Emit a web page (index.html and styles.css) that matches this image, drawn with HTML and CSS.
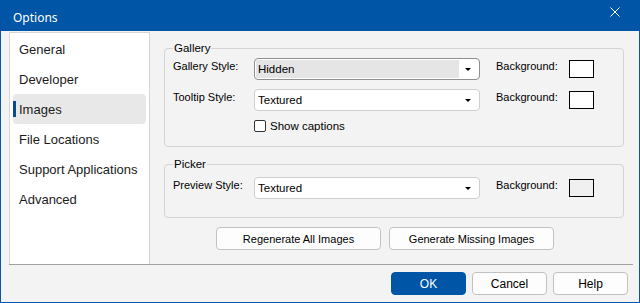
FILE: index.html
```html
<!DOCTYPE html>
<html lang="en">
<head>
  <meta charset="UTF-8">
  <title>Options</title>
  <link rel="stylesheet" href="styles.css">
</head>
<body>
  <div class="window">
    <div class="titlebar">
      <span class="title">Options</span>
      <svg class="close" width="10" height="10" viewBox="0 0 10 10">
        <path d="M0.5 0.5 L9.5 9.5 M9.5 0.5 L0.5 9.5" stroke="#fff" stroke-width="1"/>
      </svg>
    </div>

    <div class="main">
      <!-- left navigation -->
      <div class="nav">
        <div class="nav-item">General</div>
        <div class="nav-item">Developer</div>
        <div class="nav-item active">Images</div>
        <div class="nav-item">File Locations</div>
        <div class="nav-item">Support Applications</div>
        <div class="nav-item">Advanced</div>
      </div>

      <div class="panel">
        <fieldset class="group gallery">
          <legend>Gallery</legend>
          <div class="row">
            <span class="label">Gallery Style:</span>
            <div class="combo focused">
              <span class="combo-value">Hidden</span>
              <span class="combo-arrow"></span>
            </div>
            <span class="label bg-label">Background:</span>
            <span class="swatch"></span>
          </div>
          <div class="row">
            <span class="label">Tooltip Style:</span>
            <div class="combo">
              <span class="combo-value">Textured</span>
              <span class="combo-arrow"></span>
            </div>
            <span class="label bg-label">Background:</span>
            <span class="swatch"></span>
          </div>
          <label class="check">
            <span class="checkbox"></span>
            Show captions
          </label>
        </fieldset>

        <fieldset class="group picker">
          <legend>Picker</legend>
          <div class="row">
            <span class="label">Preview Style:</span>
            <div class="combo">
              <span class="combo-value">Textured</span>
              <span class="combo-arrow"></span>
            </div>
            <span class="label bg-label">Background:</span>
            <span class="swatch grey"></span>
          </div>
        </fieldset>

        <div class="actions">
          <button class="btn wide">Regenerate All Images</button>
          <button class="btn wide">Generate Missing Images</button>
        </div>
      </div>
    </div>

    <div class="footer">
      <button class="btn dialog primary">OK</button>
      <button class="btn dialog">Cancel</button>
      <button class="btn dialog">Help</button>
    </div>
  </div>
</body>
</html>
```

FILE: styles.css
```css
body {
  margin: 0;
  background-color: #f3f3f3;
  font-family: "Liberation Sans", Arial, sans-serif;
  font-size: 11px;
  color: #000;
}

.window {
  width: 640px;
  height: 303px;
  box-sizing: border-box;
  border: 1px solid #0a55a5;
  border-top: none;
  background-color: #f3f3f3;
}

.titlebar {
  height: 31px;
  margin: 0 -1px;
  background-color: #0055a6;
  display: flex;
  align-items: center;
  justify-content: space-between;
  padding: 0 20px 0 13px;
}

.title {
  color: #fff;
  font-family: "Noto Sans", sans-serif;
  font-size: 12px;
  padding-top: 3px;
}

.close {
  margin-top: -7px;
}

.main {
  display: flex;
  height: 232px;
  margin: 1px 6px 0 8px;
  border-bottom: 1px solid #a0a0a0;
}

.nav {
  width: 141px;
  box-sizing: border-box;
  background-color: #fff;
  border: 1px solid #d6d6d6;
  border-bottom: none;
  padding: 1px 3px 0 3px;
  font-family: "Liberation Sans", Arial, sans-serif;
  font-size: 13px;
  color: #1b1b1b;
}

.nav-item {
  position: relative;
  height: 30px;
  line-height: 32px;
  padding-left: 6px;
  border-radius: 4px;
  white-space: nowrap;
}

.nav-item.active {
  background-color: #e8e8e8;
}

.nav-item.active::before {
  content: "";
  position: absolute;
  left: 0;
  top: 7px;
  width: 3px;
  height: 16px;
  background-color: #0a4a94;
}

.panel {
  flex: 1;
  padding: 9px 0 0 14px;
}

.group {
  margin: 0;
  border: 1px solid #d4d4d4;
  border-radius: 4px;
  padding: 3px 8px 14px 8px;
  width: 460px;
  box-sizing: border-box;
}

.group legend {
  padding: 0 1px;
  font-size: 11.5px;
  line-height: 14px;
}

.picker {
  margin-top: 10px;
  padding-top: 6px;
  padding-bottom: 18px;
}

.row {
  display: flex;
  align-items: flex-start;
  height: 22px;
  margin-bottom: 9px;
}

.picker .row {
  margin-bottom: 0;
}

.label {
  width: 81px;
  padding-top: 1px;
  line-height: 14px;
}

.bg-label {
  width: 73px;
  margin-left: 16px;
}

.combo {
  width: 226px;
  height: 22px;
  box-sizing: border-box;
  border: 1px solid #cfcfcf;
  border-radius: 4px;
  background-color: #fff;
  display: flex;
  align-items: center;
  padding: 1px;
}

.combo.focused {
  border-color: #8f8f8f;
}

.combo-value {
  flex: 1;
  height: 100%;
  line-height: 18px;
  padding-left: 2px;
  font-size: 11.5px;
}

.combo.focused .combo-value {
  background-color: #e5e5e5;
}

.combo-arrow {
  width: 0;
  height: 0;
  margin: 0 7px 0 6px;
  border-left: 3px solid transparent;
  border-right: 3px solid transparent;
  border-top: 3px solid #000;
}

.swatch {
  width: 25px;
  height: 18px;
  box-sizing: border-box;
  border: 1px solid #000;
  background-color: #fff;
  margin-top: 2px;
}

.swatch.grey {
  background-color: #f0f0f0;
}

.check {
  display: flex;
  align-items: center;
  margin-left: 81px;
  height: 12px;
  font-size: 11.5px;
}

.checkbox {
  width: 12px;
  height: 12px;
  box-sizing: border-box;
  border: 1px solid #333;
  border-radius: 2px;
  background-color: #fff;
  margin-right: 4px;
}

.actions {
  display: flex;
  gap: 8px;
  margin: 9px 0 0 52px;
}

.btn {
  height: 23px;
  box-sizing: border-box;
  border: 1px solid #c2c2c2;
  border-radius: 4px;
  background-color: #fdfdfd;
  font-family: "Liberation Sans", Arial, sans-serif;
  font-size: 11px;
  color: #000;
  padding: 0;
}

.btn.wide {
  width: 165px;
}

.footer {
  display: flex;
  justify-content: flex-end;
  gap: 6px;
  padding: 7px 11px 0 0;
}

.btn.dialog {
  width: 75px;
  font-size: 12px;
}

.btn.primary {
  background-color: #0055a6;
  border-color: #0055a6;
  color: #fff;
}
```
